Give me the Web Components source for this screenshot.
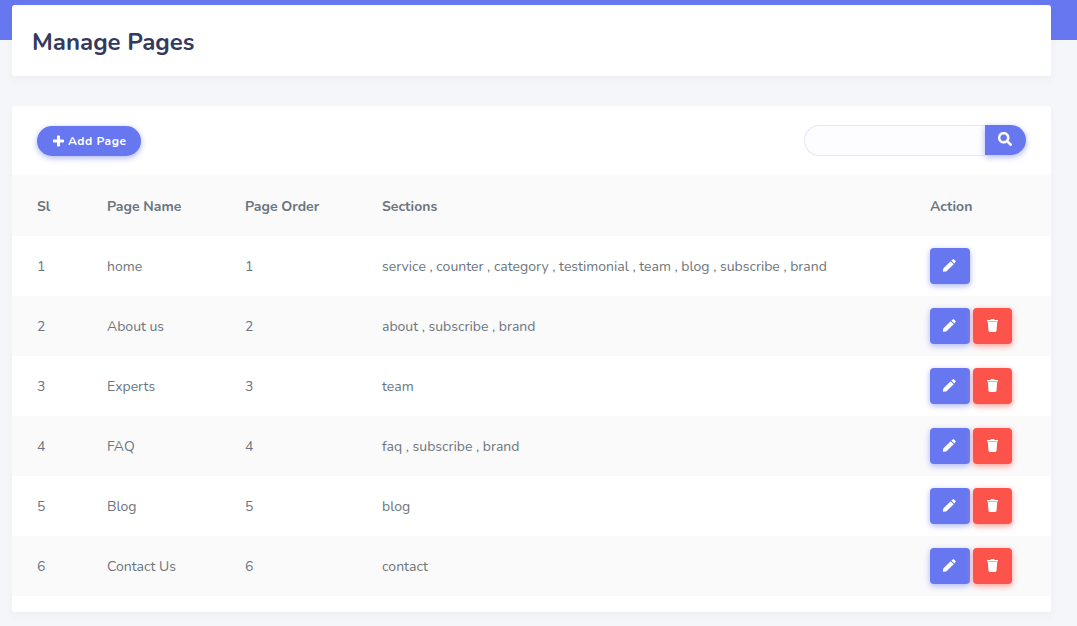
<!DOCTYPE html>
<html lang="en">
<head>
<meta charset="utf-8">
<meta name="viewport" content="width=device-width, initial-scale=1">
<title>Manage Pages</title>
<style>
  body {
    margin: 0;
    font-family: Nunito, Lato, sans-serif;
    font-size: 14px;
    line-height: 24px;
    color: #6c757d;
    background: #f4f6f9;
    --primary: #6777ef;
    --primary-shadow: 0 2px 6px #acb5f6;
    --danger: #fc544b;
    --danger-shadow: 0 2px 6px #fd9b96;
  }
</style>
</head>
<body>
<admin-page>
  <page-title slot="title">Manage Pages</page-title>
  <content-card>
    <pill-button slot="tools">Add Page</pill-button>
    <search-box slot="tools"></search-box>
    <pages-table></pages-table>
  </content-card>
</admin-page>

<script>
  const define = (name, html, setup) => {
    const template = document.createElement('template');
    template.innerHTML = html;
    customElements.define(name, class extends HTMLElement {
      constructor() {
        super();
        this.attachShadow({ mode: 'open' }).append(template.content.cloneNode(true));
      }
      connectedCallback() {
        if (setup) setup(this, this.shadowRoot);
      }
    });
  };

  define('admin-page', `
    <style>
      :host {
        display: block;
        padding: 5px 26px 14px 12px;
        background: linear-gradient(var(--primary), var(--primary)) top / 100% 40px no-repeat;
      }
      main { display: flex; flex-direction: column; gap: 30px; }
    </style>
    <main><slot name="title"></slot><slot></slot></main>`);

  define('page-title', `
    <style>
      :host {
        display: block;
        padding: 22px 20px 18px;
        border-radius: 3px;
        background: #fff;
        box-shadow: 0 4px 8px rgba(0, 0, 0, .03);
      }
      h1 { margin: 0; font-size: 24px; line-height: 31px; font-weight: 700; color: #34395e; }
    </style>
    <h1><slot></slot></h1>`);

  define('content-card', `
    <style>
      :host {
        display: block;
        padding-bottom: 16px;
        border-radius: 3px;
        background: #fff;
        box-shadow: 0 4px 8px rgba(0, 0, 0, .03);
      }
      header {
        display: flex;
        justify-content: space-between;
        align-items: center;
        height: 69px;
        padding: 0 25px;
      }
    </style>
    <header><slot name="tools"></slot></header>
    <slot></slot>`);

  define('pill-button', `
    <style>
      :host { display: block; }
      button {
        display: flex;
        align-items: center;
        gap: 4px;
        height: 30px;
        padding: 0 15px 0 16px;
        border: 0;
        border-radius: 30px;
        font: inherit;
        font-size: 12px;
        font-weight: 700;
        letter-spacing: .5px;
        color: #fff;
        background: var(--primary);
        box-shadow: var(--primary-shadow);
      }
      svg { width: 11px; height: 12px; fill: currentColor; }
    </style>
    <button type="button">
      <svg viewBox="0 0 11 12" aria-hidden="true"><path d="M4.700 .5h1.600q.7 0 .7.700V4.500h3.300q.7 0 .7.700v1.600q0 .7-.7.700H7v3.300q0 .7-.7.700H4.700q-.7 0-.7-.7V7.500H.7Q0 7.500 0 6.800V5.200q0-.7.700-.7H4V1.200q0-.7.700-.7z"/></svg>
      <slot></slot>
    </button>`);

  define('search-box', `
    <style>
      :host { display: block; }
      form { display: flex; align-items: flex-start; }
      input {
        box-sizing: border-box;
        width: 181px;
        height: 31px;
        padding: 0 15px;
        border: 1px solid #e4e6fc;
        border-right-width: 0;
        border-radius: 30px 0 0 30px;
        font: inherit;
        color: #495057;
        background: #fdfdff;
        outline: 0;
      }
      button {
        display: grid;
        place-items: center;
        width: 41px;
        height: 30px;
        padding: 0 1px 2px 0;
        border: 0;
        border-radius: 0 30px 30px 0;
        color: #fff;
        background: var(--primary);
        box-shadow: var(--primary-shadow);
      }
      svg { width: 14px; height: 14px; fill: currentColor; }
    </style>
    <form role="search">
      <input type="text" name="search" aria-label="Search pages">
      <button type="button" aria-label="Search">
        <svg viewBox="0 0 512 512" aria-hidden="true"><path stroke="currentColor" stroke-width="12" d="M505 442.700L405.300 343c-4.500-4.500-10.600-7-17-7H372c27.600-35.300 44-79.700 44-128C416 93.100 322.900 0 208 0S0 93.100 0 208s93.100 208 208 208c48.300 0 92.700-16.400 128-44v16.300c0 6.400 2.500 12.500 7 17l99.700 99.700c9.400 9.400 24.600 9.400 33.900 0l28.300-28.300c9.400-9.400 9.400-24.600.1-34zM208 336c-70.700 0-128-57.200-128-128 0-70.700 57.200-128 128-128 70.700 0 128 57.200 128 128 0 70.700-57.200 128-128 128z"/></svg>
      </button>
    </form>`);

  define('action-button', `
    <style>
      :host { display: block; }
      button {
        display: grid;
        place-items: center;
        width: 40px;
        height: 36px;
        padding: 0 1px 1px 0;
        border: 0;
        border-radius: 4px;
        color: #fff;
        background: var(--primary);
        box-shadow: var(--primary-shadow);
      }
      :host([kind="delete"]) button {
        width: 39px;
        background: var(--danger);
        box-shadow: var(--danger-shadow);
      }
      svg { width: 15px; height: 15px; fill: currentColor; }
    </style>
    <button type="button"><svg viewBox="0 0 15 15" aria-hidden="true"></svg></button>`,
    (host, root) => {
      const isDelete = host.getAttribute('kind') === 'delete';
      root.querySelector('button').setAttribute('aria-label', isDelete ? 'Delete' : 'Edit');
      root.querySelector('svg').innerHTML = isDelete
        ? '<path d="M2 2h3.300l.8-1h2.900l.8 1H13v1.500H2zM2.800 4h9.400l-.7 8.800c-.1.700-.6 1.200-1.300 1.200H4.800c-.7 0-1.200-.5-1.300-1.200z"/>'
        : '<path d="M8.700 3.300l3 3-6.700 6.500c-.3.300-.6.500-1 .6L.9 13.700l.3-2.800c0-.4.200-.7.500-1zM9.400 2.600l1-.9c.6-.6 1.300-.6 1.900 0l.9.900c.6.6.6 1.300 0 1.900l-.9 1z"/>';
    });

  const pages = [
    ['home', 'service , counter , category , testimonial , team , blog , subscribe , brand'],
    ['About us', 'about , subscribe , brand'],
    ['Experts', 'team'],
    ['FAQ', 'faq , subscribe , brand'],
    ['Blog', 'blog'],
    ['Contact Us', 'contact']
  ];

  define('pages-table', `
    <style>
      :host { display: block; }
      table { width: 100%; table-layout: fixed; border-collapse: collapse; }
      th, td { height: 58px; padding: 2px 0 0 25px; text-align: left; vertical-align: middle; }
      th { height: 59px; font-weight: 700; }
      td:last-child { height: 60px; padding-top: 0; }
      thead tr, tbody tr:nth-child(even) { background: #fafafa; }
      .sl { width: 45px; }
      .name { width: 113px; }
      .order { width: 112px; }
      .action { width: 96px; padding-right: 25px; }
      .actions { display: flex; gap: 3px; }
    </style>
    <table>
      <thead>
        <tr>
          <th class="sl" scope="col">Sl</th>
          <th class="name" scope="col">Page Name</th>
          <th class="order" scope="col">Page Order</th>
          <th scope="col">Sections</th>
          <th class="action" scope="col">Action</th>
        </tr>
      </thead>
      <tbody></tbody>
    </table>`,
    (host, root) => {
      root.querySelector('tbody').innerHTML = pages.map(([name, sections], i) => `
        <tr>
          <td>${i + 1}</td>
          <td>${name}</td>
          <td>${i + 1}</td>
          <td>${sections}</td>
          <td><div class="actions"><action-button kind="edit"></action-button>${i ? '<action-button kind="delete"></action-button>' : ''}</div></td>
        </tr>`).join('');
    });
</script>
</body>
</html>
